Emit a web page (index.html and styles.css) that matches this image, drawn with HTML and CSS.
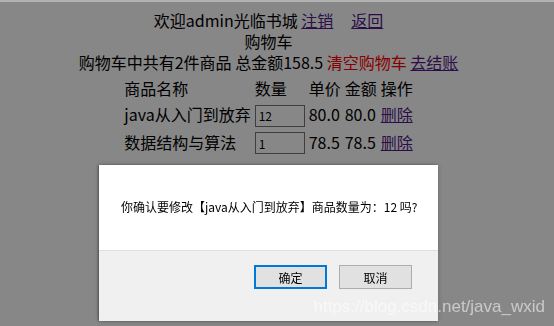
FILE: index.html
```html
<!DOCTYPE html>
<html lang="zh-CN">
<head>
    <meta charset="UTF-8">
    <title>购物车</title>
    <link rel="stylesheet" href="styles.css">
</head>
<body>

<div class="page">
    <div class="line">欢迎admin光临书城 <a href="#">注销</a>&nbsp;&nbsp;&nbsp;&nbsp;&nbsp;<a href="#">返回</a></div>
    <div class="line">购物车</div>
    <div class="line">购物车中共有2件商品 总金额158.5 <a href="#" class="clear">清空购物车</a> <a href="#">去结账</a></div>

    <table class="cart">
        <tr>
            <td>商品名称</td>
            <td>数量</td>
            <td>单价</td>
            <td>金额</td>
            <td>操作</td>
        </tr>
        <tr>
            <td>java从入门到放弃</td>
            <td><input type="text" class="count" value="12"></td>
            <td>80.0</td>
            <td>80.0</td>
            <td><a href="#">删除</a></td>
        </tr>
        <tr>
            <td>数据结构与算法</td>
            <td><input type="text" class="count" value="1"></td>
            <td>78.5</td>
            <td>78.5</td>
            <td><a href="#">删除</a></td>
        </tr>
    </table>
</div>

<!-- confirm() box -->
<div class="mask"></div>
<div class="dialog">
    <div class="dialog-body">你确认要修改【java从入门到放弃】商品数量为：12 吗?</div>
    <div class="dialog-foot">
        <button type="button" class="btn btn-ok">确定</button>
        <button type="button" class="btn">取消</button>
    </div>
</div>

<div class="watermark">https://blog.csdn.net/java_wxid</div>

</body>
</html>
```

FILE: styles.css
```css
body {
    margin: 0;
    background-color: #fff;
    font-family: "Noto Sans CJK SC", sans-serif;
    font-size: 16px;
    line-height: 21px;
    color: #000;
}

.page {
    width: 537px;
    padding-top: 10px;
    text-align: center;
}

a {
    color: #551a8b;
}

a.clear {
    color: #ff0000;
    text-decoration: none;
}

.cart {
    margin: 2px auto 0;
    text-align: left;
}

.cart td {
    padding: 1px;
}

.count {
    width: 50px;
    height: 22px;
    box-sizing: border-box;
    padding: 0 3px;
    border: 1px solid #767676;
    font-family: "Noto Sans CJK SC", sans-serif;
    font-size: 12px;
    vertical-align: middle;
}

/* grey layer behind the alert */
.mask {
    position: fixed;
    top: 0;
    left: 0;
    right: 0;
    bottom: 0;
    background-color: rgba(0, 0, 0, 0.47);
    border-top: 2px solid rgba(255, 255, 255, 0.35);
}

.dialog {
    position: fixed;
    top: 165px;
    left: 99px;
    width: 339px;
    height: 156px;
    display: flex;
    flex-direction: column;
    background-color: #fff;
    box-shadow: -1px 0 2px rgba(0, 0, 0, 0.35), 0 0 6px rgba(0, 0, 0, 0.2);
    font-size: 12px;
    line-height: 16px;
}

.dialog-body {
    height: 85px;
    box-sizing: border-box;
    padding: 34px 0 0 22px;
    color: #000;
}

.dialog-foot {
    flex: 1;
    display: flex;
    justify-content: flex-end;
    align-items: flex-start;
    gap: 12px;
    padding: 14px 26px 0 0;
    background-color: #f0f0f0;
    border-top: 1px solid #dfdfdf;
}

.btn {
    width: 73px;
    height: 24px;
    padding: 0;
    background-color: #e1e1e1;
    border: 1px solid #adadad;
    font-family: "Noto Sans CJK SC", sans-serif;
    font-size: 12px;
    color: #000;
}

.btn-ok {
    border: 2px solid #0078d7;
}

.watermark {
    position: fixed;
    right: 9px;
    bottom: 9px;
    font-family: "Liberation Sans", Arial, sans-serif;
    font-size: 17px;
    line-height: 20px;
    color: rgba(255, 255, 255, 0.55);
}
```
